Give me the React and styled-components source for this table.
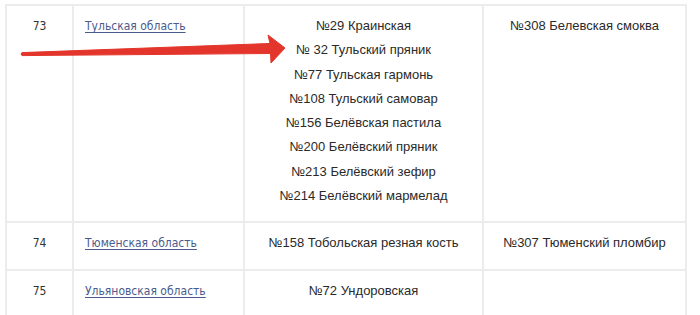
import React from "react";
import styled, { createGlobalStyle } from "styled-components";

const GlobalStyle = createGlobalStyle`
  body {
    margin: 0;
    background: #fff;
    font-family: "DejaVu Sans Condensed", "DejaVu Sans", Verdana, sans-serif;
  }
`;

const Page = styled.div`
  position: relative;
  padding: 4px 0 0 5px;
  width: 700px;
  height: 315px;
  box-sizing: border-box;
  overflow: hidden;
`;

const Table = styled.table`
  width: 680px;
  border-collapse: collapse;
  table-layout: fixed;
  color: #333;
  border-top: 2px solid #dcdcdc;
`;

const Cell = styled.td`
  vertical-align: top;
  padding: 8px 11px 13px;
  border: 2px solid #ececec;
  line-height: 24.3px;
  text-align: ${(p) => p.$align || "center"};
  font-family: ${(p) =>
    p.$sans
      ? '"Liberation Sans", Arial, sans-serif'
      : '"DejaVu Sans Condensed", "DejaVu Sans", Verdana, sans-serif'};
  font-size: ${(p) => (p.$sans ? "13px" : "12px")};
  color: ${(p) => (p.$sans ? "#2a2a2a" : "#333")};
`;

const RegionLink = styled.a`
  color: #4b5b8c;
  text-decoration: underline;
  text-underline-offset: 2px;
`;

const Item = styled.div`
  white-space: nowrap;
`;

const Arrow = styled.svg`
  position: absolute;
  left: 0;
  top: 0;
  pointer-events: none;
`;

const rows = [
  {
    num: 73,
    region: "Тульская область",
    brands: [
      "№29 Краинская",
      "№ 32 Тульский пряник",
      "№77 Тульская гармонь",
      "№108 Тульский самовар",
      "№156 Белёвская пастила",
      "№200 Белёвский пряник",
      "№213 Белёвский зефир",
      "№214 Белёвский мармелад",
    ],
    extra: ["№308 Белевская смоква"],
  },
  {
    num: 74,
    region: "Тюменская область",
    brands: ["№158 Тобольская резная кость"],
    extra: ["№307 Тюменский пломбир"],
  },
  {
    num: 75,
    region: "Ульяновская область",
    brands: ["№72 Ундоровская"],
    extra: [],
  },
];

export default function App() {
  return (
    <Page>
      <GlobalStyle />
      <Table>
        <colgroup>
          <col style={{ width: 67 }} />
          <col style={{ width: 171 }} />
          <col style={{ width: 239 }} />
          <col style={{ width: 203 }} />
        </colgroup>
        <tbody>
          {rows.map((r) => (
            <tr key={r.num}>
              <Cell>{r.num}</Cell>
              <Cell $align="left">
                <RegionLink href="#">{r.region}</RegionLink>
              </Cell>
              <Cell $sans>
                {r.brands.map((b) => (
                  <Item key={b}>{b}</Item>
                ))}
              </Cell>
              <Cell $sans>
                {r.extra.map((b) => (
                  <Item key={b}>{b}</Item>
                ))}
              </Cell>
            </tr>
          ))}
        </tbody>
      </Table>
      <Arrow width="700" height="315" viewBox="0 0 700 315">
        <path
          d="M22 52.6 L270 43.5 L268 35 L285 48 L271 63 L270.5 53.5 L22 55.6 Q20 54 22 52.6 Z"
          fill="#e3352b"
          stroke="#e3352b"
          strokeWidth="1"
          strokeLinejoin="round"
        />
      </Arrow>
    </Page>
  );
}
